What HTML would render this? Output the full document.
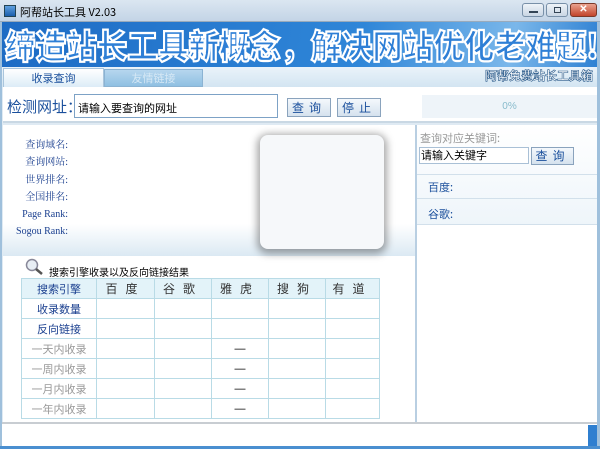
<!DOCTYPE html>
<html><head><meta charset="utf-8"><style>
*{margin:0;padding:0;box-sizing:border-box}
body{width:600px;height:449px;overflow:hidden;position:relative;background:#dfeaf3;font-family:"Liberation Sans","Noto Sans CJK SC","WenQuanYi Zen Hei",sans-serif;font-size:12px}
.a{position:absolute}
.cj{font-family:"Noto Sans CJK SC","WenQuanYi Zen Hei",sans-serif}
.btn{position:absolute;border:1px solid #8aa3bd;background:linear-gradient(#f4f8fc,#d5e2ee);color:#1a4f9c;font-size:12px;text-align:center;letter-spacing:5px}
table{border-collapse:collapse;position:absolute;left:21px;top:278px;width:359px}
td{border:1px solid #b9dbe6;height:20px;text-align:center;font-size:11px;color:#999;padding:0}
tr:first-child td{background:#e3f3f9;color:#333;font-size:12px;letter-spacing:8px}
tr:first-child td:first-child{color:#1a3f8f;font-size:11px;letter-spacing:0}
.bl{color:#1a3f8f!important}
</style></head><body>
<div class="a" style="left:0;top:0;width:600px;height:22px;background:linear-gradient(#dbe6f1,#c3d4e6);border-bottom:1px solid #9ab"></div>
<div class="a" style="left:4px;top:5px;width:12px;height:12px;background:linear-gradient(#5fa0e0,#1b5fae);border:1px solid #245"></div>
<div class="a cj" style="left:20px;top:4px;font-size:11px;color:#000">阿帮站长工具 V2.03</div>
<div class="a" style="left:522px;top:3px;width:22px;height:14px;border:1px solid #7890a8;border-radius:3px;background:linear-gradient(#eef3f8,#c9d6e4)"><div class="a" style="left:6px;top:7px;width:9px;height:2px;background:#345"></div></div>
<div class="a" style="left:546px;top:3px;width:22px;height:14px;border:1px solid #7890a8;border-radius:3px;background:linear-gradient(#eef3f8,#c9d6e4)"><div class="a" style="left:7px;top:3px;width:7px;height:6px;border:1px solid #345"></div></div>
<div class="a" style="left:570px;top:3px;width:27px;height:14px;border:1px solid #7a3a2a;border-radius:3px;background:linear-gradient(#e9a28e,#c2452c);color:#fff;font-size:10px;text-align:center;line-height:12px;font-weight:bold">✕</div>
<div class="a" style="left:0;top:22px;width:600px;height:45px;background:linear-gradient(100deg,#1d6bc4 0%,#2f86d8 60%,#7ab7ea 85%,#2c7fd2 100%)"></div>
<div class="a cj" style="left:5px;top:22px;font-size:30px;font-weight:900;color:#2e7fd6;-webkit-text-stroke:2px #fff;letter-spacing:0;white-space:nowrap;line-height:44px;transform:scale(1.02,1.12);transform-origin:left center">缔造站长工具新概念，解决网站优化老难题!</div>
<div class="a" style="left:0;top:67px;width:600px;height:20px;background:linear-gradient(#eaf3fa,#d3e5f2)"></div>
<div class="a cj" style="left:3px;top:68px;width:101px;height:19px;background:linear-gradient(#fff,#dcecf7);border:1px solid #a9c5dc;border-bottom:none;color:#1a4f9c;font-size:11px;text-align:center;line-height:18px">收录查询</div>
<div class="a cj" style="left:104px;top:69px;width:99px;height:18px;background:linear-gradient(#b6d6ee,#8fc0e2);border:1px solid #8bb3d3;color:#d6e8f5;font-size:11px;text-align:center;line-height:17px">友情链接</div>
<div class="a cj" style="left:485px;top:67px;font-size:12px;color:#fff;-webkit-text-stroke:0.6px #2a5a8a;font-weight:bold">阿帮免费站长工具箱</div>
<div class="a" style="left:3px;top:87px;width:594px;height:36px;background:#fff;border-bottom:2px solid #c9d8e4"></div>
<div class="a cj" style="left:7px;top:96px;font-size:15px;color:#1a4f9c">检测网址：</div>
<div class="a cj" style="left:74px;top:94px;width:204px;height:24px;border:1px solid #7da2c6;background:#fff;font-size:11px;padding:5px 3px;color:#000">请输入要查询的网址</div>
<div class="btn cj" style="left:287px;top:98px;width:44px;height:19px;line-height:17px">查询</div>
<div class="btn cj" style="left:337px;top:98px;width:44px;height:19px;line-height:17px">停止</div>
<div class="a" style="left:422px;top:95px;width:175px;height:23px;background:#eef4f9;color:#8bc;font-size:10px;text-align:center;line-height:23px">0%</div>
<div class="a" style="left:3px;top:125px;width:412px;height:297px;background:#fff"></div>
<div class="a" style="left:3px;top:224px;width:412px;height:32px;background:linear-gradient(#fff,#dbe9f3)"></div>
<div class="a" style="left:6px;top:137px;width:62px;text-align:right;font-family:'Liberation Serif','Noto Serif CJK SC',serif;font-size:10px;color:#1a3f8f;line-height:17.3px">查询域名:<br>查询网站:<br>世界排名:<br>全国排名:<br>Page Rank:<br>Sogou Rank:</div>
<div class="a" style="left:260px;top:135px;width:124px;height:114px;background:#f6f8fa;border-radius:8px;box-shadow:0 2px 8px 3px rgba(0,0,0,.35)"></div>
<svg class="a" style="left:25px;top:258px" width="20" height="18"><circle cx="7" cy="7" r="5.5" fill="#e8eef4" stroke="#889" stroke-width="1.5"/><line x1="11" y1="11" x2="17" y2="16" stroke="#555" stroke-width="2.5"/></svg>
<div class="a cj" style="left:49px;top:264px;font-size:10px;color:#000">搜索引擎收录以及反向链接结果</div>
<table>
<tr><td style="width:75px">搜索引擎</td><td style="width:58px">百度</td><td style="width:57px">谷歌</td><td style="width:57px">雅虎</td><td style="width:57px">搜狗</td><td>有道</td></tr>
<tr><td class="bl">收录数量</td><td></td><td></td><td></td><td></td><td></td></tr>
<tr><td class="bl">反向链接</td><td></td><td></td><td></td><td></td><td></td></tr>
<tr><td>一天内收录</td><td></td><td></td><td style="color:#000">—</td><td></td><td></td></tr>
<tr><td>一周内收录</td><td></td><td></td><td style="color:#000">—</td><td></td><td></td></tr>
<tr><td>一月内收录</td><td></td><td></td><td style="color:#000">—</td><td></td><td></td></tr>
<tr><td>一年内收录</td><td></td><td></td><td style="color:#000">—</td><td></td><td></td></tr>
</table>
<div class="a" style="left:415px;top:125px;width:2px;height:297px;background:#b9cfe2"></div>
<div class="a" style="left:417px;top:125px;width:180px;height:297px;background:#fff"></div>
<div class="a" style="left:417px;top:125px;width:180px;height:100px;background:linear-gradient(#fff,#eef5fa)"></div>
<div class="a cj" style="left:420px;top:130px;font-size:11px;color:#999">查询对应关键词:</div>
<div class="a cj" style="left:419px;top:147px;width:110px;height:17px;border:1px solid #a9c0d6;background:#fff;font-size:11px;line-height:15px;padding-left:1px">请输入关键字</div>
<div class="btn cj" style="left:531px;top:147px;width:43px;height:18px;line-height:16px">查询</div>
<div class="a" style="left:417px;top:174px;width:180px;height:1px;background:#d2e0eb"></div>
<div class="a cj" style="left:428px;top:179px;font-size:11px;color:#1a4f9c">百度:</div>
<div class="a" style="left:417px;top:198px;width:180px;height:1px;background:#d2e0eb"></div>
<div class="a cj" style="left:428px;top:206px;font-size:11px;color:#1a4f9c">谷歌:</div>
<div class="a" style="left:417px;top:224px;width:180px;height:1px;background:#d2e0eb"></div>
<div class="a" style="left:0;top:422px;width:600px;height:2px;background:#c8cdd2"></div>
<div class="a" style="left:0;top:424px;width:600px;height:22px;background:#fff"></div>
<div class="a" style="left:588px;top:425px;width:10px;height:21px;background:#2f7fd0"></div>
<div class="a" style="left:0;top:446px;width:600px;height:3px;background:#4a8fd0"></div>
<div class="a" style="left:0;top:22px;width:2px;height:424px;background:#9fc0dc"></div>
<div class="a" style="left:597px;top:22px;width:3px;height:424px;background:#9fc0dc"></div>
</body></html>
